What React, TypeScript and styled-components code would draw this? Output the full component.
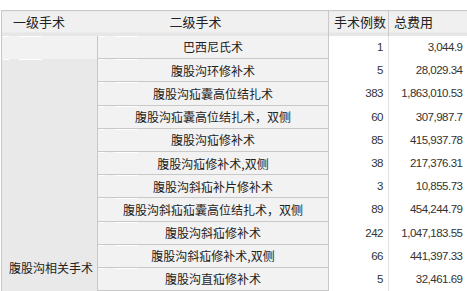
import React from 'react';
import styled, { createGlobalStyle } from 'styled-components';

const GlobalStyle = createGlobalStyle`
  html, body {
    margin: 0;
    padding: 0;
    background: #fff;
  }
  body {
    font-family: "Noto Sans CJK SC", "Liberation Sans", sans-serif;
    color: #222;
    overflow: hidden;
  }
`;

type Row = { name: string; count: number; total: string };

const rows: Row[] = [
  { name: '巴西尼氏术', count: 1, total: '3,044.9' },
  { name: '腹股沟环修补术', count: 5, total: '28,029.34' },
  { name: '腹股沟疝囊高位结扎术', count: 383, total: '1,863,010.53' },
  { name: '腹股沟疝囊高位结扎术，双侧', count: 60, total: '307,987.7' },
  { name: '腹股沟疝修补术', count: 85, total: '415,937.78' },
  { name: '腹股沟疝修补术,双侧', count: 38, total: '217,376.31' },
  { name: '腹股沟斜疝补片修补术', count: 3, total: '10,855.73' },
  { name: '腹股沟斜疝疝囊高位结扎术，双侧', count: 89, total: '454,244.79' },
  { name: '腹股沟斜疝修补术', count: 242, total: '1,047,183.55' },
  { name: '腹股沟斜疝修补术,双侧', count: 66, total: '441,397.33' },
  { name: '腹股沟直疝修补术', count: 5, total: '32,461.69' },
];

const Page = styled.div`
  padding: 10px 0 0 1px;
  width: 466px;
`;

const Table = styled.table`
  border-collapse: collapse;
  table-layout: fixed;
  width: 466px;
  border-top: 1px solid #c8c8c8;
  border-left: 1px solid #c8c8c8;
`;

const Head = styled.th<{ $pad?: number; $divider?: boolean }>`
  height: 25px;
  padding: 0 0 3px ${(p) => p.$pad ?? 5}px;
  box-sizing: border-box;
  text-align: left;
  font-weight: normal;
  font-size: 13px;
  color: #222;
  background: linear-gradient(#f0f0f0 0, #f0f0f0 21px, #e6e6e6 21px);
  border-right: ${(p) => (p.$divider ? '1px solid #c8c8c8' : 'none')};
  white-space: nowrap;
`;

const highlight = `
  background-image: linear-gradient(90deg,
    transparent 0, transparent 1px, #fff 1px, #fff 7px,
    transparent 7px, transparent 17px, #fff 17px, #fff 40px,
    transparent 40px);
  background-size: 100% 1px;
  background-repeat: no-repeat;
  background-position: 0 0;
`;

const BodyRow = styled.tr`
  height: 23.2px;
`;

const GroupCell = styled.td<{ $blank?: boolean }>`
  padding: ${(p) => (p.$blank ? '0' : '200px 0 0 7px')};
  vertical-align: top;
  font-size: 12px;
  white-space: nowrap;
  background-color: ${(p) => (p.$blank ? '#f2f2f2' : '#e9e9e9')};
  border-right: 1px solid #c8c8c8;
  ${highlight}
`;

const NameCell = styled.td`
  padding: 0 4px;
  text-align: center;
  font-size: 12px;
  white-space: nowrap;
  background-color: #f2f2f2;
  border-right: 1px solid #c8c8c8;
  border-bottom: 1px solid #c8c8c8;
  ${highlight}
`;

const NumCell = styled.td<{ $divider?: boolean }>`
  padding: 0 5px 0 0;
  text-align: right;
  font-family: "Liberation Sans", Arial, sans-serif;
  font-size: 11.5px;
  letter-spacing: -0.5px;
  color: #333;
  background: #fff;
  border-right: ${(p) => (p.$divider ? '1px solid #e2e2e2' : 'none')};
  white-space: nowrap;
`;

export default function App() {
  return (
    <>
      <GlobalStyle />
      <Page>
        <Table>
          <colgroup>
            <col style={{ width: 96 }} />
            <col style={{ width: 231 }} />
            <col style={{ width: 60 }} />
            <col style={{ width: 79 }} />
          </colgroup>
          <thead>
            <tr>
              <Head $pad={11}>一级手术</Head>
              <Head $pad={72} $divider>二级手术</Head>
              <Head $divider>手术例数</Head>
              <Head>总费用</Head>
            </tr>
          </thead>
          <tbody>
            {rows.map((r, i) => (
              <BodyRow key={r.name}>
                {i === 0 && <GroupCell $blank />}
                {i === 1 && <GroupCell rowSpan={rows.length - 1}>腹股沟相关手术</GroupCell>}
                <NameCell>{r.name}</NameCell>
                <NumCell $divider>{r.count}</NumCell>
                <NumCell>{r.total}</NumCell>
              </BodyRow>
            ))}
          </tbody>
        </Table>
      </Page>
    </>
  );
}
